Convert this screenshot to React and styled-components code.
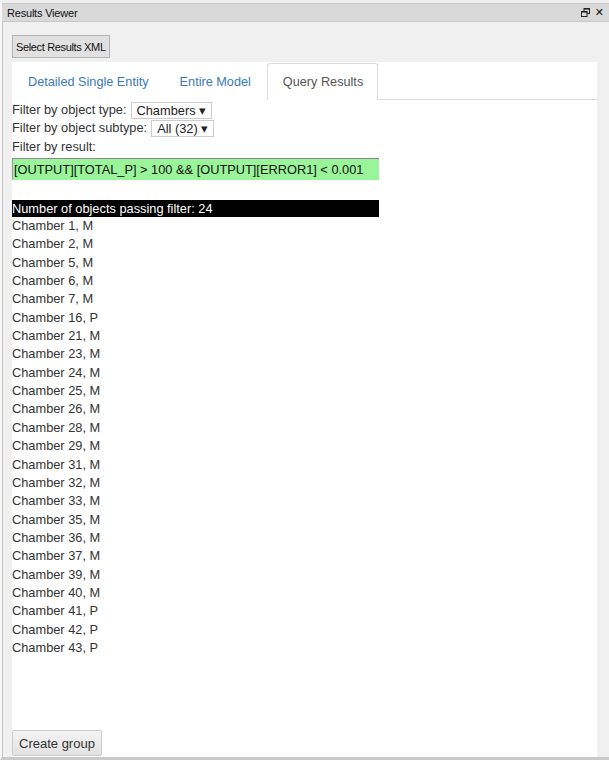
import React, { useState } from "react";
import styled, { createGlobalStyle } from "styled-components";

const GlobalStyle = createGlobalStyle`
  html, body {
    margin: 0;
    padding: 0;
    background: #f0f0f0;
  }
  #root {
    height: 760px;
  }
`;

const chambers = [
  "Chamber 1, M",
  "Chamber 2, M",
  "Chamber 5, M",
  "Chamber 6, M",
  "Chamber 7, M",
  "Chamber 16, P",
  "Chamber 21, M",
  "Chamber 23, M",
  "Chamber 24, M",
  "Chamber 25, M",
  "Chamber 26, M",
  "Chamber 28, M",
  "Chamber 29, M",
  "Chamber 31, M",
  "Chamber 32, M",
  "Chamber 33, M",
  "Chamber 35, M",
  "Chamber 36, M",
  "Chamber 37, M",
  "Chamber 39, M",
  "Chamber 40, M",
  "Chamber 41, P",
  "Chamber 42, P",
  "Chamber 43, P",
];

const tabs = ["Detailed Single Entity", "Entire Model", "Query Results"];

function App() {
  const [activeTab, setActiveTab] = useState(2);

  return (
    <Window>
      <GlobalStyle />
      <TitleBar>
        <Title>Results Viewer</Title>
        <TitleIcons>
          <svg width="9" height="9" viewBox="0 0 9 9">
            <rect x="3" y="0.5" width="5.5" height="5" fill="none" stroke="#222" strokeWidth="1" />
            <rect x="3" y="0" width="6" height="1.6" fill="#222" />
            <rect x="0.5" y="3.5" width="5.5" height="5" fill="#dcdcdc" stroke="#222" strokeWidth="1" />
            <rect x="0.5" y="3" width="6" height="1.6" fill="#222" />
          </svg>
          <CloseGlyph>✕</CloseGlyph>
        </TitleIcons>
      </TitleBar>

      <Body>
        <ToolButton>Select Results XML</ToolButton>

        <Panel>
          <TabBar>
            {tabs.map((t, i) => (
              <Tab key={t} $active={i === activeTab} onClick={() => setActiveTab(i)}>
                {t}
              </Tab>
            ))}
          </TabBar>

          <Content>
            <FilterRow>
              Filter by object type:
              <Select>Chambers ▾</Select>
            </FilterRow>
            <FilterRow>
              Filter by object subtype:
              <Select>All (32) ▾</Select>
            </FilterRow>
            <FilterRow>Filter by result:</FilterRow>
            <ResultInput
              defaultValue="[OUTPUT][TOTAL_P] > 100 && [OUTPUT][ERROR1] < 0.001"
            />

            <CountBar>Number of objects passing filter: 24</CountBar>

            <List>
              {chambers.map((c) => (
                <Item key={c}>{c}</Item>
              ))}
            </List>
          </Content>

          <Footer>
            <GroupButton>Create group</GroupButton>
          </Footer>
        </Panel>
      </Body>
    </Window>
  );
}

const Window = styled.div`
  height: 760px;
  box-sizing: border-box;
  display: flex;
  flex-direction: column;
  padding-top: 3px;
  border-left: 2px solid #f7f7f7;
  border-bottom: 3px solid #c9c9c9;
  background: #f0f0f0;
  font-family: "Liberation Sans", Arial, sans-serif;
`;

const TitleBar = styled.div`
  height: 19px;
  box-sizing: border-box;
  display: flex;
  align-items: center;
  justify-content: space-between;
  padding: 0 5px 0 5px;
  background: #d9d9d9;
  border-top: 1px solid #c8c8c8;
  border-bottom: 1px solid #c8c8c8;
`;

const Title = styled.span`
  font-size: 11px;
  color: #111;
  letter-spacing: -0.2px;
`;

const TitleIcons = styled.div`
  display: flex;
  align-items: center;
  gap: 5px;
`;

const CloseGlyph = styled.span`
  font-size: 11px;
  font-family: "DejaVu Sans", sans-serif;
  color: #111;
`;

const Body = styled.div`
  flex: 1;
  display: flex;
  flex-direction: column;
  padding: 13px 12px 0 9px;
  border-left: 1px solid #c3c3c3;
  min-height: 0;
`;

const ToolButton = styled.button`
  align-self: flex-start;
  height: 23px;
  padding: 0 3px;
  margin: 0;
  font-family: "Liberation Sans", Arial, sans-serif;
  font-size: 11px;
  letter-spacing: -0.35px;
  color: #111;
  background: #e1e1e1;
  border: 1px solid #b4b4b4;
  border-radius: 0;
`;

const Panel = styled.div`
  flex: 1;
  margin-top: 4px;
  background: #fff;
  display: flex;
  flex-direction: column;
  min-height: 0;
`;

const TabBar = styled.div`
  display: flex;
  height: 38px;
  box-sizing: border-box;
  padding-top: 1px;
  border-bottom: 1px solid #ddd;
`;

const Tab = styled.div`
  padding: 0 14px 0 15px;
  margin-left: ${(p) => (p.$active ? "1px" : "0")};
  display: flex;
  align-items: center;
  font-size: 12.7px;
  cursor: pointer;
  color: ${(p) => (p.$active ? "#555" : "#3a7ab8")};
  background: #fff;
  border: 1px solid ${(p) => (p.$active ? "#ddd" : "transparent")};
  border-bottom-color: ${(p) => (p.$active ? "#fff" : "transparent")};
  border-radius: 3px 3px 0 0;
  margin-bottom: -1px;
`;

const Content = styled.div`
  flex: 1;
  padding-top: 1px;
  font-size: 12.8px;
  color: #333;
  line-height: 18.35px;
`;

const FilterRow = styled.div`
  display: flex;
  align-items: center;
  gap: 4px;
  height: 18.35px;
`;

const Select = styled.span`
  display: inline-block;
  height: 17px;
  line-height: 15px;
  padding: 0 5px;
  box-sizing: border-box;
  border: 1px solid #ccc;
  background: #fff;
  color: #222;
`;

const ResultInput = styled.input`
  display: block;
  width: 367px;
  height: 22px;
  box-sizing: border-box;
  margin: 2px 0 20px 0;
  padding: 0 1px;
  font-family: "Liberation Sans", Arial, sans-serif;
  font-size: 12.8px;
  color: #111;
  background: #9af59a;
  border: none;
  border-top: 1px solid #888;
  border-left: 1px solid #999;
  outline: none;
`;

const CountBar = styled.div`
  width: 367px;
  height: 17px;
  line-height: 17px;
  background: #000;
  color: #fff;
`;

const List = styled.div`
  display: flex;
  flex-direction: column;
`;

const Item = styled.div`
  height: 18.35px;
  color: #333;
`;

const Footer = styled.div`
  padding-bottom: 1px;
`;

const GroupButton = styled.button`
  height: 26px;
  padding: 0 6px;
  margin: 0;
  font-family: "Liberation Sans", Arial, sans-serif;
  font-size: 13px;
  color: #333;
  background: linear-gradient(#f4f4f4, #e2e2e2);
  border: 1px solid #ccc;
  border-radius: 2px;
`;

export default App;
